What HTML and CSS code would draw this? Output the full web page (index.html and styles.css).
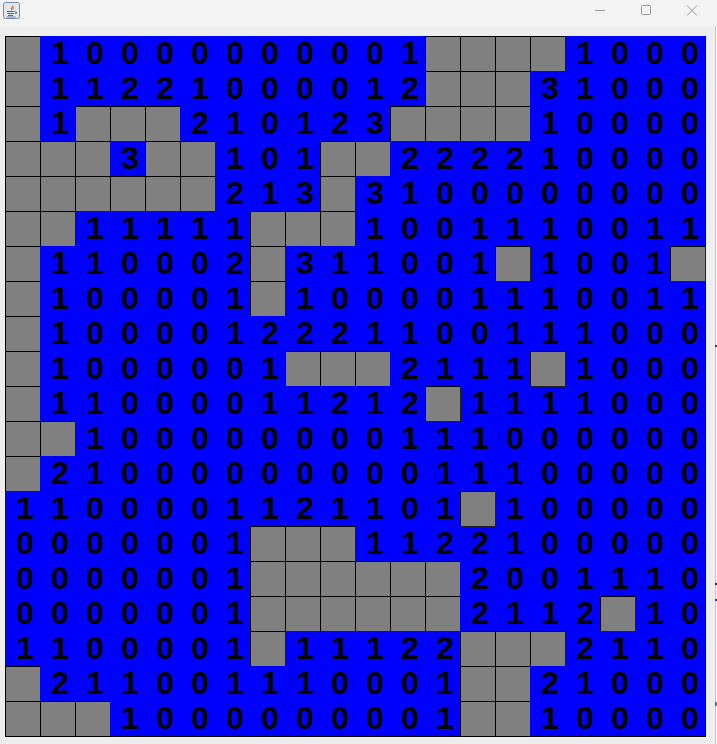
FILE: index.html
```html
<!DOCTYPE html>
<html lang="en">
<head>
    <meta charset="UTF-8">
    <title>Minesweeper</title>
    <link rel="stylesheet" href="styles.css">
</head>
<body>
<div class="titleBar">
    <svg class="appIcon" width="17" height="17" viewBox="0 0 17 17">
        <rect x="0.5" y="0.5" width="16" height="16" rx="2" fill="#dfe8f0" stroke="#6f8ca8"/>
        <path d="M9.5 2.5c1 1.5-2.5 3-1.5 5 .3.6.7 1 1 1.300-.2-1.300 2.500-2.300 1.500-4.300-.3-.7-.6-1.300-1-2z" fill="#e8792b"/>
        <path d="M4 9.500h7.500M4.500 11.500h6.500M5 13.500h5M12 10c1.800-.3 1.800 1.500.3 1.800" fill="none" stroke="#44698c" stroke-width="1.100"/>
        <path d="M3.500 15h9" stroke="#6f8ca8"/>
    </svg>
    <div class="winBtns">
        <svg width="12" height="12" viewBox="0 0 12 12"><path d="M1 5.500h10" stroke="#999"/></svg>
        <svg width="12" height="12" viewBox="0 0 12 12"><rect x="1.500" y="0.500" width="9" height="9" rx="1" fill="none" stroke="#999"/></svg>
        <svg width="12" height="12" viewBox="0 0 12 12"><path d="M1 0.500l10 10M11 0.500l-10 10" fill="none" stroke="#999"/></svg>
    </div>
</div>
<div class="content">
    <div class="board">
        <span class="closed"></span><span>1</span><span>0</span><span>0</span><span>0</span><span>0</span><span>0</span><span>0</span><span>0</span><span>0</span><span>0</span><span>1</span><span class="closed"></span><span class="closed"></span><span class="closed"></span><span class="closed"></span><span>1</span><span>0</span><span>0</span><span>0</span>
        <span class="closed"></span><span>1</span><span>1</span><span>2</span><span>2</span><span>1</span><span>0</span><span>0</span><span>0</span><span>0</span><span>1</span><span>2</span><span class="closed"></span><span class="closed"></span><span class="closed"></span><span>3</span><span>1</span><span>0</span><span>0</span><span>0</span>
        <span class="closed"></span><span>1</span><span class="closed"></span><span class="closed"></span><span class="closed"></span><span>2</span><span>1</span><span>0</span><span>1</span><span>2</span><span>3</span><span class="closed"></span><span class="closed"></span><span class="closed"></span><span class="closed"></span><span>1</span><span>0</span><span>0</span><span>0</span><span>0</span>
        <span class="closed"></span><span class="closed"></span><span class="closed"></span><span>3</span><span class="closed"></span><span class="closed"></span><span>1</span><span>0</span><span>1</span><span class="closed"></span><span class="closed"></span><span>2</span><span>2</span><span>2</span><span>2</span><span>1</span><span>0</span><span>0</span><span>0</span><span>0</span>
        <span class="closed"></span><span class="closed"></span><span class="closed"></span><span class="closed"></span><span class="closed"></span><span class="closed"></span><span>2</span><span>1</span><span>3</span><span class="closed"></span><span>3</span><span>1</span><span>0</span><span>0</span><span>0</span><span>0</span><span>0</span><span>0</span><span>0</span><span>0</span>
        <span class="closed"></span><span class="closed"></span><span>1</span><span>1</span><span>1</span><span>1</span><span>1</span><span class="closed"></span><span class="closed"></span><span class="closed"></span><span>1</span><span>0</span><span>0</span><span>1</span><span>1</span><span>1</span><span>0</span><span>0</span><span>1</span><span>1</span>
        <span class="closed"></span><span>1</span><span>1</span><span>0</span><span>0</span><span>0</span><span>2</span><span class="closed"></span><span>3</span><span>1</span><span>1</span><span>0</span><span>0</span><span>1</span><span class="closed lone"></span><span>1</span><span>0</span><span>0</span><span>1</span><span class="closed lone"></span>
        <span class="closed"></span><span>1</span><span>0</span><span>0</span><span>0</span><span>0</span><span>1</span><span class="closed"></span><span>1</span><span>0</span><span>0</span><span>0</span><span>0</span><span>1</span><span>1</span><span>1</span><span>0</span><span>0</span><span>1</span><span>1</span>
        <span class="closed"></span><span>1</span><span>0</span><span>0</span><span>0</span><span>0</span><span>1</span><span>2</span><span>2</span><span>2</span><span>1</span><span>1</span><span>0</span><span>0</span><span>1</span><span>1</span><span>1</span><span>0</span><span>0</span><span>0</span>
        <span class="closed"></span><span>1</span><span>0</span><span>0</span><span>0</span><span>0</span><span>0</span><span>1</span><span class="closed"></span><span class="closed"></span><span class="closed"></span><span>2</span><span>1</span><span>1</span><span>1</span><span class="closed lone"></span><span>1</span><span>0</span><span>0</span><span>0</span>
        <span class="closed"></span><span>1</span><span>1</span><span>0</span><span>0</span><span>0</span><span>0</span><span>1</span><span>1</span><span>2</span><span>1</span><span>2</span><span class="closed lone"></span><span>1</span><span>1</span><span>1</span><span>1</span><span>0</span><span>0</span><span>0</span>
        <span class="closed"></span><span class="closed"></span><span>1</span><span>0</span><span>0</span><span>0</span><span>0</span><span>0</span><span>0</span><span>0</span><span>0</span><span>1</span><span>1</span><span>1</span><span>0</span><span>0</span><span>0</span><span>0</span><span>0</span><span>0</span>
        <span class="closed"></span><span>2</span><span>1</span><span>0</span><span>0</span><span>0</span><span>0</span><span>0</span><span>0</span><span>0</span><span>0</span><span>0</span><span>1</span><span>1</span><span>1</span><span>0</span><span>0</span><span>0</span><span>0</span><span>0</span>
        <span>1</span><span>1</span><span>0</span><span>0</span><span>0</span><span>0</span><span>1</span><span>1</span><span>2</span><span>1</span><span>1</span><span>0</span><span>1</span><span class="closed lone"></span><span>1</span><span>0</span><span>0</span><span>0</span><span>0</span><span>0</span>
        <span>0</span><span>0</span><span>0</span><span>0</span><span>0</span><span>0</span><span>1</span><span class="closed"></span><span class="closed"></span><span class="closed"></span><span>1</span><span>1</span><span>2</span><span>2</span><span>1</span><span>0</span><span>0</span><span>0</span><span>0</span><span>0</span>
        <span>0</span><span>0</span><span>0</span><span>0</span><span>0</span><span>0</span><span>1</span><span class="closed"></span><span class="closed"></span><span class="closed"></span><span class="closed"></span><span class="closed"></span><span class="closed"></span><span>2</span><span>0</span><span>0</span><span>1</span><span>1</span><span>1</span><span>0</span>
        <span>0</span><span>0</span><span>0</span><span>0</span><span>0</span><span>0</span><span>1</span><span class="closed"></span><span class="closed"></span><span class="closed"></span><span class="closed"></span><span class="closed"></span><span class="closed"></span><span>2</span><span>1</span><span>1</span><span>2</span><span class="closed lone"></span><span>1</span><span>0</span>
        <span>1</span><span>1</span><span>0</span><span>0</span><span>0</span><span>0</span><span>1</span><span class="closed"></span><span>1</span><span>1</span><span>1</span><span>2</span><span>2</span><span class="closed"></span><span class="closed"></span><span class="closed"></span><span>2</span><span>1</span><span>1</span><span>0</span>
        <span class="closed"></span><span>2</span><span>1</span><span>1</span><span>0</span><span>0</span><span>1</span><span>1</span><span>1</span><span>0</span><span>0</span><span>0</span><span>1</span><span class="closed"></span><span class="closed"></span><span>2</span><span>1</span><span>0</span><span>0</span><span>0</span>
        <span class="closed"></span><span class="closed"></span><span class="closed"></span><span>1</span><span>0</span><span>0</span><span>0</span><span>0</span><span>0</span><span>0</span><span>0</span><span>0</span><span>1</span><span class="closed"></span><span class="closed"></span><span>1</span><span>0</span><span>0</span><span>0</span><span>0</span>
    </div>
</div>
<div class="behind">
    <i class="mark markA"></i>
    <i class="mark markB"></i>
    <i class="mark markC"></i>
    <i class="mark markD"></i>
</div>
</body>
</html>
```

FILE: styles.css
```css
*{padding: 0;margin: 0;box-sizing: border-box;}
html,body{height: 100%;}
body{
    overflow: hidden;
    background: #eeeeee;
    font-family: "Liberation Sans", Arial, sans-serif;
}
.titleBar{
    display: flex;
    justify-content: space-between;
    height: 26px;
    padding: 2px 0 0 3px;
    background: #f3f3f3;
}
.winBtns{
    display: flex;
    gap: 34px;
    padding: 3px 19px 0 0;
}
.content{
    padding: 10px 0 0 5px;
}
.board{
    display: grid;
    grid-template-columns: repeat(20, 35px);
    grid-auto-rows: 35px;
    width: 701px;
    border-right: 1px solid #000;
    border-bottom: 1px solid #000;
    background: #0000ff;
}
.board span{
    padding-left: 11px;
    font-size: 32px;
    font-weight: bold;
    line-height: 34px;
    color: #000;
}
.board .closed{
    border-top: 1px solid #000;
    border-left: 1px solid #000;
    background: #808080;
}
.board .lone{
    box-shadow: 1px 1px 0 #222;
}
/* sliver of the window behind, over the right edge */
.behind{
    position: absolute;
    top: 26px;
    right: 0;
    bottom: 0;
    width: 2px;
    border-left: 1px solid #c6c6c6;
    background: #f8f8f8;
}
.mark{
    position: absolute;
    left: -1px;
    width: 2px;
    height: 2px;
}
.markA{top: 319px;background: #444;}
.markB{top: 557px;background: #222;}
.markC{top: 573px;background: #2233cc;}
.markD{top: 676px;height: 4px;background: #4a7a68;}
```
